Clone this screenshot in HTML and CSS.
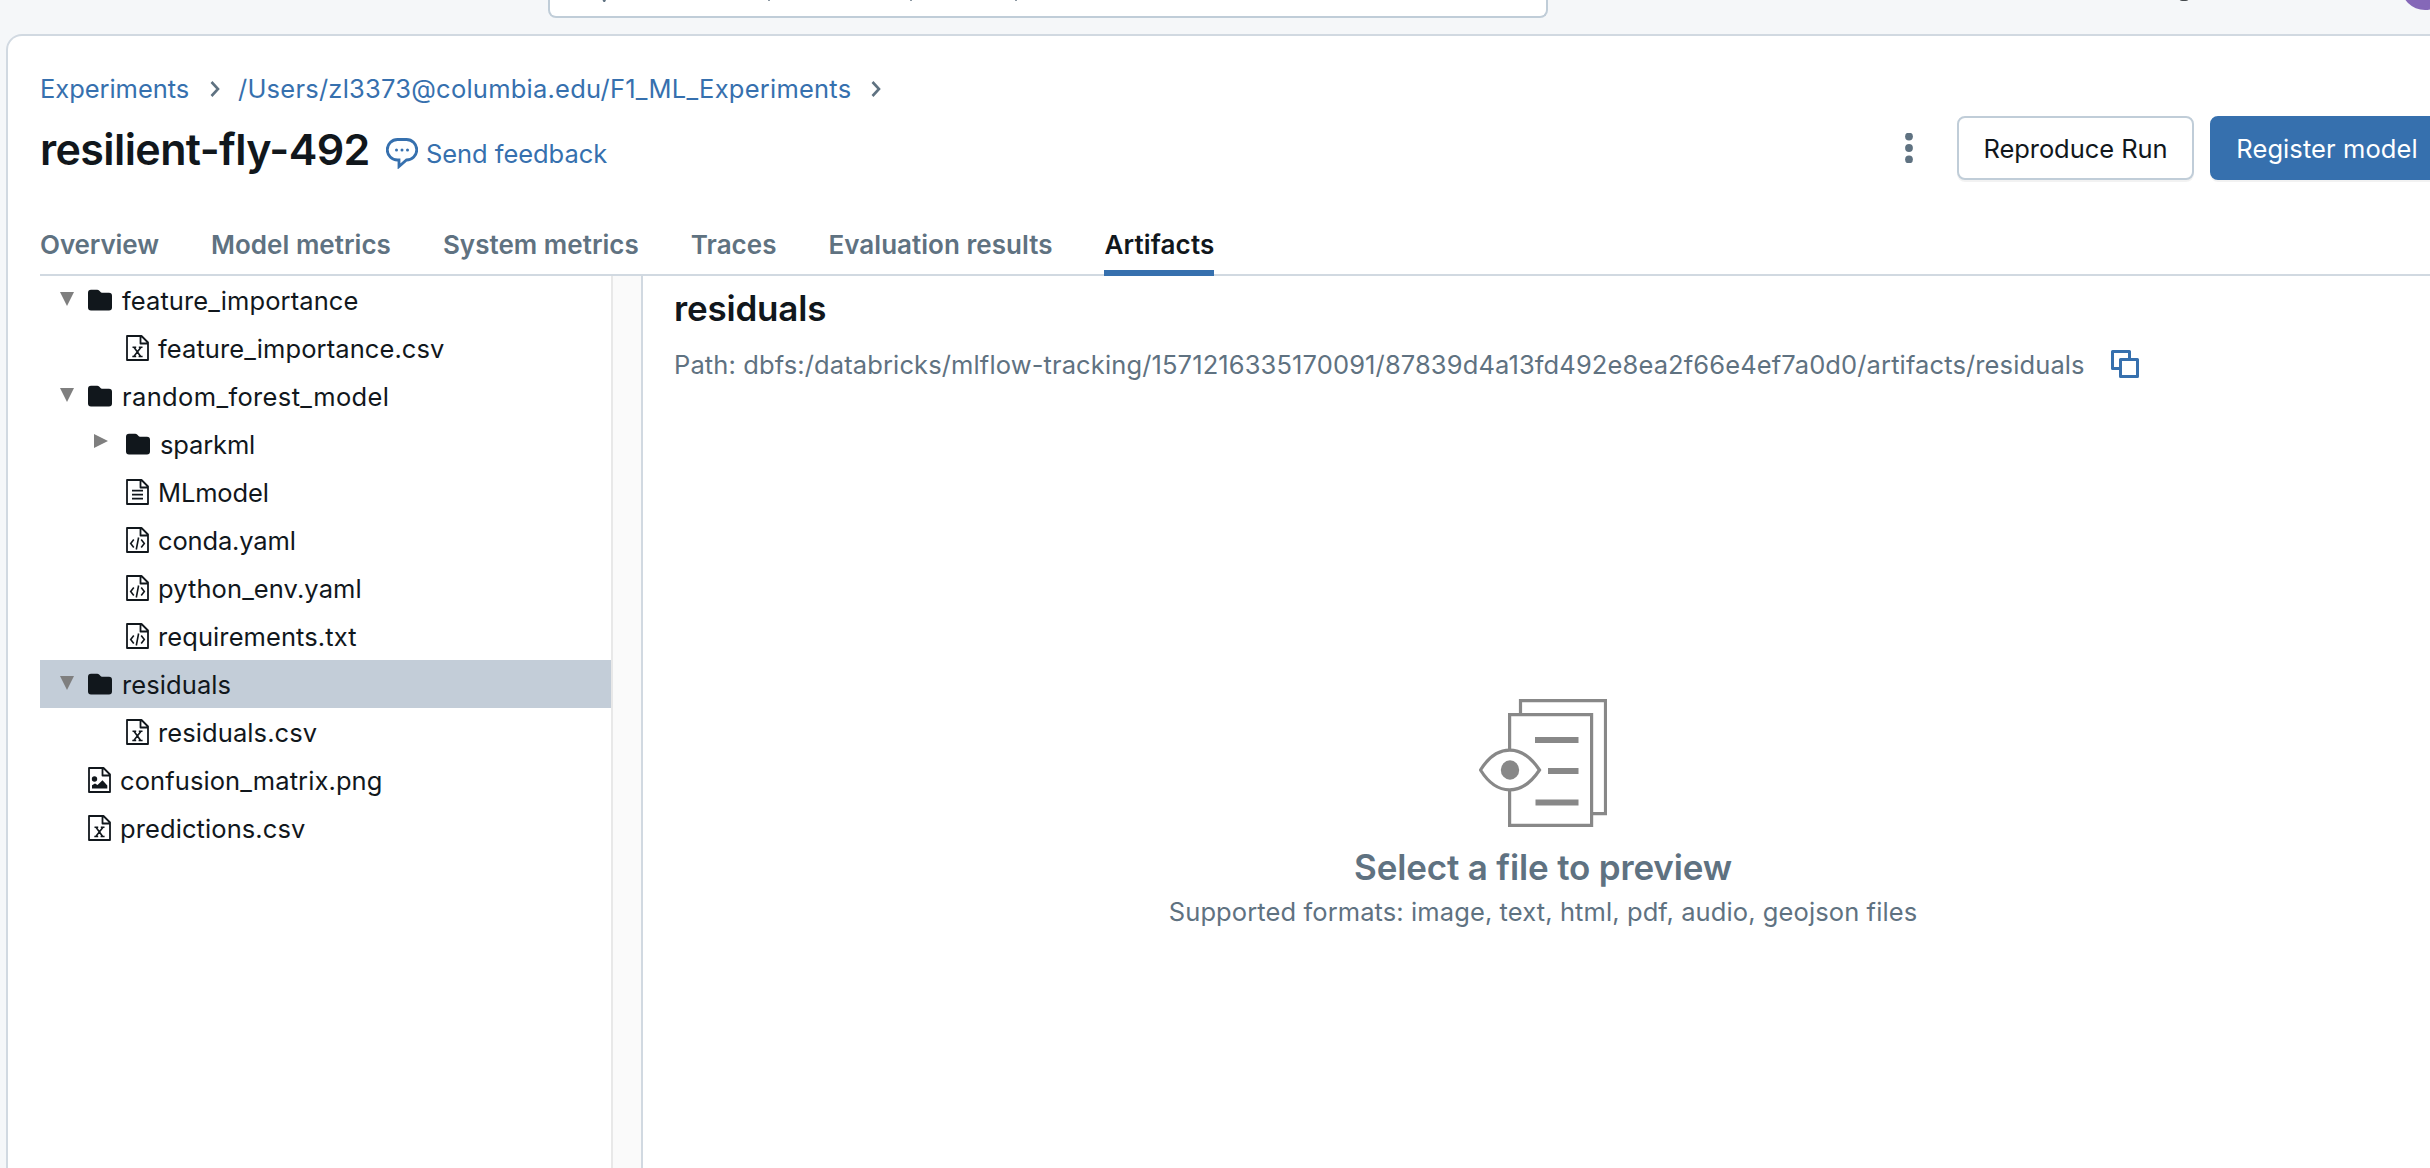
FILE: index.html
```html
<!DOCTYPE html>
<html lang="en">
<head>
<meta charset="utf-8">
<title>resilient-fly-492</title>
<link rel="stylesheet" href="styles.css">
</head>
<body>
<svg class="defs" width="0" height="0" aria-hidden="true">
  <symbol id="folder" viewBox="0 0 24 22"><path d="M3 .8h6.2c.8 0 1.4.3 1.9.8l1.700 1.700c.3.3.6.4 1 .4H21a3 3 0 0 1 3 3v11.700a3 3 0 0 1-3 3H3a3 3 0 0 1-3-3V3.800a3 3 0 0 1 3-3z" fill="currentColor"/></symbol>
  <symbol id="page" viewBox="0 0 23 26"><path d="M1 1h14.500l6.500 6.500V25H1zM14.500 1v7.500H22" fill="none" stroke="currentColor" stroke-width="1.800" stroke-linejoin="round"/></symbol>
  <symbol id="csv" viewBox="0 0 23 26"><use href="#page"/><path d="M8 12.300l6.500 9M15 12.300l-7 9M6.500 12.300h3.700M12.800 12.300h3.700M6.300 21.500h3.900M12.600 21.500h4" fill="none" stroke="currentColor" stroke-width="1.600"/></symbol>
  <symbol id="text" viewBox="0 0 23 26"><use href="#page"/><path d="M6 11.700h11M6 15.700h11M6 19.700h11" fill="none" stroke="currentColor" stroke-width="1.700"/></symbol>
  <symbol id="code" viewBox="0 0 23 26"><use href="#page"/><path d="M7.800 12.500L4.700 16.500l3.100 4M15.200 12.500l3.100 4-3.100 4M12.600 10.500l-2.300 12" fill="none" stroke="currentColor" stroke-width="1.600"/></symbol>
  <symbol id="image" viewBox="0 0 23 26"><use href="#page"/><circle cx="6.500" cy="12" r="2.700" fill="currentColor"/><path d="M4 21.500v-3.300l3-1.700 2.500 1.500 5-4.700 4.800 5.200v3z" fill="currentColor"/></symbol>
</svg>

<header class="topbar">
  <div class="search">
    <svg width="996" height="4" viewBox="0 0 996 4"><path d="M52.500 0h3.500l-1 2h-1.500z" fill="#5f7281"/><path d="M218 0h2v1h-2zM360 0h2v1h-2zM465 0h2v1h-2z" fill="#8d99a3"/></svg>
  </div>
  <span class="workspace-mark"></span>
  <span class="avatar"></span>
</header>

<main class="panel">
  <nav class="crumbs">
    <a class="crumb-root">Experiments</a>
    <svg class="chevron" viewBox="0 0 10 16"><path d="M1.500 1l6.500 7-6.500 7" /></svg>
    <a class="crumb-path">/Users/zl3373@columbia.edu/F1_ML_Experiments</a>
    <svg class="chevron" viewBox="0 0 10 16"><path d="M1.500 1l6.500 7-6.500 7" /></svg>
  </nav>

  <div class="title-row">
    <h1>resilient-fly-492</h1>
    <a class="feedback">
      <svg width="32" height="31" viewBox="0 0 32 31"><path d="M11.500 1.500h9a10 10 0 0 1 0 20.500L13 28.500V22h-1.500a10 10 0 0 1 0-20.500z" fill="none" stroke="currentColor" stroke-width="2.800"/><g fill="currentColor"><circle cx="10.500" cy="12" r="1.500"/><circle cx="16" cy="12" r="1.500"/><circle cx="21.500" cy="12" r="1.500"/></g></svg>
      <span>Send feedback</span>
    </a>
    <div class="actions">
      <svg class="kebab" width="8" height="30" viewBox="0 0 8 30"><g fill="currentColor"><circle cx="4" cy="3.500" r="3.900"/><circle cx="4" cy="15" r="3.900"/><circle cx="4" cy="26.500" r="3.900"/></g></svg>
      <button class="btn">Reproduce Run</button>
      <button class="btn primary">Register model</button>
    </div>
  </div>

  <nav class="tabs">
    <a class="tab">Overview</a>
    <a class="tab">Model metrics</a>
    <a class="tab">System metrics</a>
    <a class="tab">Traces</a>
    <a class="tab">Evaluation results</a>
    <a class="tab active">Artifacts</a>
  </nav>

  <div class="content">
    <ul class="tree">
      <li class="node folder"><i class="caret open"></i><svg><use href="#folder"/></svg><span>feature_importance</span></li>
      <li class="node child"><svg><use href="#csv"/></svg><span>feature_importance.csv</span></li>
      <li class="node folder wide"><i class="caret open"></i><svg><use href="#folder"/></svg><span>random_forest_model</span></li>
      <li class="node folder child tight"><i class="caret"></i><svg><use href="#folder"/></svg><span>sparkml</span></li>
      <li class="node child tight"><svg><use href="#text"/></svg><span>MLmodel</span></li>
      <li class="node child tight"><svg><use href="#code"/></svg><span>conda.yaml</span></li>
      <li class="node child"><svg><use href="#code"/></svg><span>python_env.yaml</span></li>
      <li class="node child"><svg><use href="#code"/></svg><span>requirements.txt</span></li>
      <li class="node folder selected"><i class="caret open"></i><svg><use href="#folder"/></svg><span>residuals</span></li>
      <li class="node child"><svg><use href="#csv"/></svg><span>residuals.csv</span></li>
      <li class="node"><svg><use href="#image"/></svg><span>confusion_matrix.png</span></li>
      <li class="node"><svg><use href="#csv"/></svg><span>predictions.csv</span></li>
    </ul>
    <div class="gutter"></div>
    <section class="preview">
      <h2>residuals</h2>
      <div class="path-row">
        <span class="path">Path: dbfs:/databricks/mlflow-tracking/1571216335170091/87839d4a13fd492e8ea2f66e4ef7a0d0/artifacts/residuals</span>
        <svg class="copy" width="28" height="28" viewBox="0 0 28 28"><path d="M8 18.500H1.500v-17h17V8M9.500 9.500h17v17h-17z" fill="none" stroke="currentColor" stroke-width="3" stroke-linejoin="round"/></svg>
      </div>
      <div class="empty">
        <svg width="128" height="128" viewBox="0 0 128 128" fill="none" stroke="#888" stroke-width="3.200"><path d="M41.500 15V1.600h85v113H114"/><path d="M30.600 15.600h82v110.800h-82z"/><path d="M1.500 71C18 44.500 43 44.500 60.500 71 43 97.500 18 97.500 1.500 71z" fill="#fff"/><ellipse cx="31" cy="71" rx="9.200" ry="9.700" fill="#888" stroke="none"/><path d="M56 41h43.500M69 72h30.500M56.500 103.500h43" stroke-width="6"/></svg>
        <h3>Select a file to preview</h3>
        <p>Supported formats: image, text, html, pdf, audio, geojson files</p>
      </div>
    </section>
  </div>
</main>
</body>
</html>
```
FILE: styles.css
```css
* { box-sizing: border-box; }
body {
  margin: 0;
  width: 2430px;
  height: 1168px;
  overflow: hidden;
  background: #f5f7f9;
  color: #11171c;
  font-family: Inter, "Liberation Sans", sans-serif;
  font-size: 25.5px;
  line-height: 40px;
  display: flex;
  flex-direction: column;
}
h1, h2, h3, p, ul { margin: 0; padding: 0; }
.defs { position: absolute; }

.topbar { height: 34px; flex: none; position: relative; padding-left: 548px; overflow: hidden; }
.search {
  width: 1000px; height: 18px;
  background: #fff;
  border: 2px solid #c0cdd8; border-top: 0;
  border-radius: 0 0 8px 8px;
  overflow: hidden;
}
.search svg { display: block; }
.workspace-mark { position: absolute; left: 2179px; top: -6px; width: 10px; height: 7px; border-radius: 4px; background: #44494d; }
.avatar { position: absolute; left: 2401px; top: -38px; width: 48px; height: 48px; border-radius: 50%; background: #8568b8; }

.panel {
  flex: 1;
  min-height: 0;
  width: 2460px;
  margin-left: 6px;
  padding-left: 32px;
  background: #fff;
  border: 2px solid #d1d9e1; border-bottom: 0;
  border-radius: 16px 0 0 0;
  display: flex; flex-direction: column;
}

.crumbs { display: flex; align-items: center; height: 40px; margin-top: 33px; flex: none; color: #3670ae; white-space: nowrap; }
.crumb-root { width: 149px; letter-spacing: -0.05px; }
.crumb-path { width: 612px; letter-spacing: 0.23px; }
.chevron { width: 10px; height: 16px; margin: 0 18px 0 21px; fill: none; stroke: #5f7281; stroke-width: 2.6; }

.title-row { display: flex; align-items: center; height: 64px; margin-top: 7px; flex: none; }
h1 { width: 328px; font-size: 43px; line-height: 64px; font-weight: 600; letter-spacing: -0.6px; white-space: nowrap; margin-top: 1px; }
.feedback { display: flex; align-items: center; gap: 8px; margin: 11px 0 0 18px; color: #3670ae; white-space: nowrap; }
.feedback span { letter-spacing: -0.06px; padding-top: 1px; }
.actions { display: flex; align-items: center; margin-left: auto; width: 559px; flex: none; }
.kebab { color: #5f7281; margin-right: 44px; }
.btn {
  height: 64px; width: 237px; flex: none; padding: 2px 0 0;
  font: inherit; color: inherit; letter-spacing: -0.05px; white-space: nowrap;
  background: #fff; border: 2px solid #c0cdd8; border-radius: 8px;
  box-shadow: 0 2px 0 rgba(0, 0, 0, .05);
}
.primary { margin-left: 16px; width: 234px; background: #3670ae; border-color: #3670ae; color: #fff; letter-spacing: 0.08px; }

.tabs { display: flex; gap: 52px; height: 96px; padding-top: 45px; flex: none; border-bottom: 2px solid #d1d9e1; font-size: 26px; font-weight: 600; color: #5f7281; white-space: nowrap; }
.tab { height: 51px; letter-spacing: 0.03px; }
.tab:first-child { letter-spacing: -0.1px; }
.tab.active { color: #11171c; letter-spacing: 0.15px; border-bottom: 6px solid #3670ae; }

.content { flex: 1; min-height: 0; display: flex; }
.tree { width: 571px; flex: none; list-style: none; }
.node { display: flex; align-items: center; height: 48px; padding-left: 48px; white-space: nowrap; letter-spacing: 0.09px; line-height: 48px; }
.node svg { width: 23px; height: 26px; margin-right: 9px; flex: none; }
.node span { padding-top: 2px; }
.tight { letter-spacing: -0.15px; }
.wide { letter-spacing: 0.36px; }
.folder svg { width: 24px; height: 22px; margin-right: 10px; }
.child { padding-left: 86px; }
.folder { padding-left: 20px; }
.folder.child { padding-left: 54px; }
.selected { background: #c3cdd8; }
.caret { flex: none; width: 14px; height: 14px; margin: -6px 18px 0 0; background: #7f7f7f; clip-path: polygon(0 0, 100% 50%, 0 100%); }
.caret.open { clip-path: polygon(0 0, 100% 0, 50% 100%); margin: -2px 14px 0 0; }
.gutter { width: 32px; flex: none; background: #fafafa; border: solid #e8e8e8; border-width: 0 2px; border-right-color: #d1d9e1; }

.preview { width: 1800px; flex: none; padding-left: 31px; display: flex; flex-direction: column; }
h2 { font-size: 35px; line-height: 48px; font-weight: 600; letter-spacing: -0.2px; margin-top: 8px; }
.path-row { display: flex; align-items: center; height: 40px; margin-top: 13px; color: #5f7281; white-space: nowrap; }
.path { width: 1437px; letter-spacing: 0.12px; }
.copy { color: #3670ae; flex: none; margin-top: -2px; }
.empty { margin: 314px 0 0 -31px; display: flex; flex-direction: column; align-items: center; color: #5f7281; }
h3 { font-size: 35px; line-height: 48px; font-weight: 600; letter-spacing: -0.17px; margin-top: 16px; }
.empty p { letter-spacing: 0.1px; padding-top: 1px; }
```
